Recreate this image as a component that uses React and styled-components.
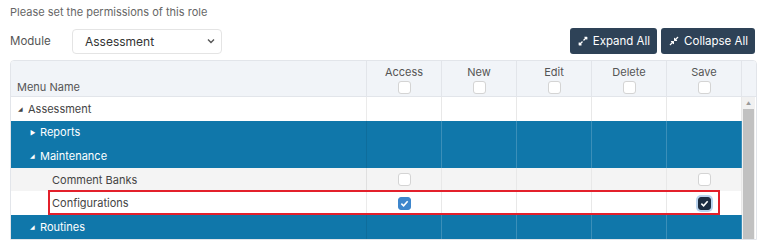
import styled, { createGlobalStyle } from 'styled-components';
import { FaExpandAlt, FaCompressAlt } from 'react-icons/fa';

const GlobalStyle = createGlobalStyle`
  body {
    margin: 0;
    font-family: Inter, "Noto Sans", sans-serif;
    background: #fff;
    color: #444;
  }
`;

const columns = ['Access', 'New', 'Edit', 'Delete', 'Save'];

const rows = [
  { name: 'Assessment', level: 0, toggle: 'open', kind: 'root' },
  { name: 'Reports', level: 1, toggle: 'closed', kind: 'group' },
  { name: 'Maintenance', level: 1, toggle: 'open', kind: 'group' },
  { name: 'Comment Banks', level: 2, kind: 'alt', checks: [false, null, null, null, false] },
  {
    name: 'Configurations',
    level: 2,
    kind: 'leaf',
    marked: true,
    checks: [true, null, null, null, 'focus'],
  },
  { name: 'Routines', level: 1, toggle: 'open', kind: 'group' },
];

function Check({ state }) {
  if (state === null || state === undefined) return null;
  if (!state) return <Box />;
  return (
    <Box $checked $focus={state === 'focus'}>
      <svg width="9" height="9" viewBox="0 0 10 10">
        <path d="M1.5 5.2 L4 7.5 L8.5 2.5" fill="none" stroke="#fff" strokeWidth="1.8" />
      </svg>
    </Box>
  );
}

function App() {
  return (
    <Page>
      <GlobalStyle />
      <Intro>Please set the permissions of this role</Intro>
      <Toolbar>
        <Label>Module</Label>
        <Select>
          <span>Assessment</span>
          <svg width="8" height="6" viewBox="0 0 8 6">
            <path d="M1 1.5 L4 4.5 L7 1.5" fill="none" stroke="#555" strokeWidth="1.4" />
          </svg>
        </Select>
        <Spacer />
        <Button>
          <FaExpandAlt size={10} />
          Expand All
        </Button>
        <Button>
          <FaCompressAlt size={10} />
          Collapse All
        </Button>
      </Toolbar>
      <Table>
        <HeaderRow>
          <NameHead>Menu Name</NameHead>
          {columns.map((c) => (
            <ColHead key={c}>
              <span>{c}</span>
              <Box />
            </ColHead>
          ))}
          <ScrollHead />
        </HeaderRow>
        <Body>
          <Rows>
            {rows.map((r) => (
              <Row key={r.name} $kind={r.kind}>
                <NameCell $level={r.level} $hasToggle={!!r.toggle}>
                  {r.toggle && <Toggle>{r.toggle === 'open' ? '◢' : '▶'}</Toggle>}
                  {r.name}
                </NameCell>
                {columns.map((c, i) => (
                  <Cell key={c} $kind={r.kind}>
                    <Check state={r.checks ? r.checks[i] : null} />
                  </Cell>
                ))}
                {r.marked && <Marker />}
              </Row>
            ))}
          </Rows>
          <Scrollbar>
            <ScrollArrow>▲</ScrollArrow>
            <Thumb />
          </Scrollbar>
        </Body>
      </Table>
    </Page>
  );
}

const Page = styled.div`
  width: 768px;
  height: 240px;
  overflow: hidden;
  padding: 5px 0 0 10px;
  box-sizing: border-box;
`;

const Intro = styled.div`
  font-size: 11px;
  color: #666;
  line-height: 14px;
`;

const Toolbar = styled.div`
  display: flex;
  align-items: center;
  gap: 4px;
  margin-top: 9px;
  width: 745px;
`;

const Label = styled.div`
  font-size: 11.5px;
  color: #555;
  width: 58px;
  margin-top: -1px;
`;

const Select = styled.div`
  width: 150px;
  height: 25px;
  box-sizing: border-box;
  border: 1px solid #e4e4e4;
  border-radius: 4px;
  display: flex;
  align-items: center;
  justify-content: space-between;
  padding: 0 6px 0 12px;
  font-size: 12px;
  color: #333;
`;

const Spacer = styled.div`
  flex: 1;
`;

const Button = styled.button`
  height: 26px;
  display: flex;
  align-items: center;
  gap: 5px;
  padding: 0 7px 0 8px;
  border: none;
  border-radius: 3px;
  background: #2e4257;
  color: #fff;
  font-family: Inter, "Noto Sans", sans-serif;
  font-size: 11.5px;
`;

const Table = styled.div`
  margin-top: 6px;
  width: 745px;
  border: 1px solid #e2e5ea;
  border-radius: 4px 4px 0 0;
  overflow: hidden;
`;

const grid = `
  display: grid;
  grid-template-columns: 356px repeat(5, 75px);
`;

const HeaderRow = styled.div`
  display: grid;
  grid-template-columns: 356px repeat(5, 75px) 1fr;
  height: 35px;
  background: #f1f4f8;
  border-bottom: 1px solid #e2e5ea;
`;

const NameHead = styled.div`
  font-size: 11px;
  color: #555;
  padding: 0 6px 2px;
  display: flex;
  align-items: flex-end;
  border-right: 1px solid #e2e5ea;
`;

const ColHead = styled.div`
  display: flex;
  flex-direction: column;
  align-items: center;
  gap: 2px;
  padding-top: 4px;
  font-size: 11px;
  color: #555;
  border-right: 1px solid #e2e5ea;
`;

const ScrollHead = styled.div``;

const Body = styled.div`
  display: flex;
`;

const Rows = styled.div`
  width: 731px;
`;

const Row = styled.div`
  ${grid}
  position: relative;
  height: 23.6px;
  background: ${(p) =>
    p.$kind === 'group' ? '#1077aa' : p.$kind === 'alt' ? '#f4f4f4' : '#fff'};
  color: ${(p) => (p.$kind === 'group' ? '#fff' : '#444')};
`;

const NameCell = styled.div`
  display: flex;
  align-items: center;
  font-size: 11px;
  padding-left: ${(p) => 7 + p.$level * 12 + (p.$hasToggle ? 0 : 10)}px;
  border-right: 1px solid rgba(0, 0, 0, 0.08);
`;

const Toggle = styled.span`
  font-size: 6px;
  width: 10px;
  display: inline-block;
`;

const Cell = styled.div`
  display: flex;
  align-items: center;
  justify-content: center;
  border-right: 1px solid
    ${(p) => (p.$kind === 'group' ? 'rgba(255,255,255,0.18)' : '#e8e8e8')};
`;

const Box = styled.div`
  width: 13px;
  height: 13px;
  box-sizing: border-box;
  border-radius: 3px;
  display: flex;
  align-items: center;
  justify-content: center;
  background: ${(p) => (p.$focus ? '#1c2d42' : p.$checked ? '#3d86cc' : '#fff')};
  border: 1px solid ${(p) => (p.$checked ? (p.$focus ? '#1c2d42' : '#3d86cc') : '#d4d4d4')};
  box-shadow: ${(p) => (p.$focus ? '0 0 0 2px #b9d3ee' : 'none')};
`;

const Marker = styled.div`
  position: absolute;
  left: 37px;
  top: -1px;
  width: 672px;
  height: 25px;
  border: 2px solid #e3202b;
  box-sizing: border-box;
  pointer-events: none;
`;

const Scrollbar = styled.div`
  width: 13px;
  background: #f1f1f1;
  display: flex;
  flex-direction: column;
  align-items: center;
`;

const ScrollArrow = styled.div`
  font-size: 5px;
  color: #999;
  height: 12px;
  line-height: 12px;
`;

const Thumb = styled.div`
  width: 11px;
  flex: 1;
  background: #c1c1c1;
`;

export default App;
